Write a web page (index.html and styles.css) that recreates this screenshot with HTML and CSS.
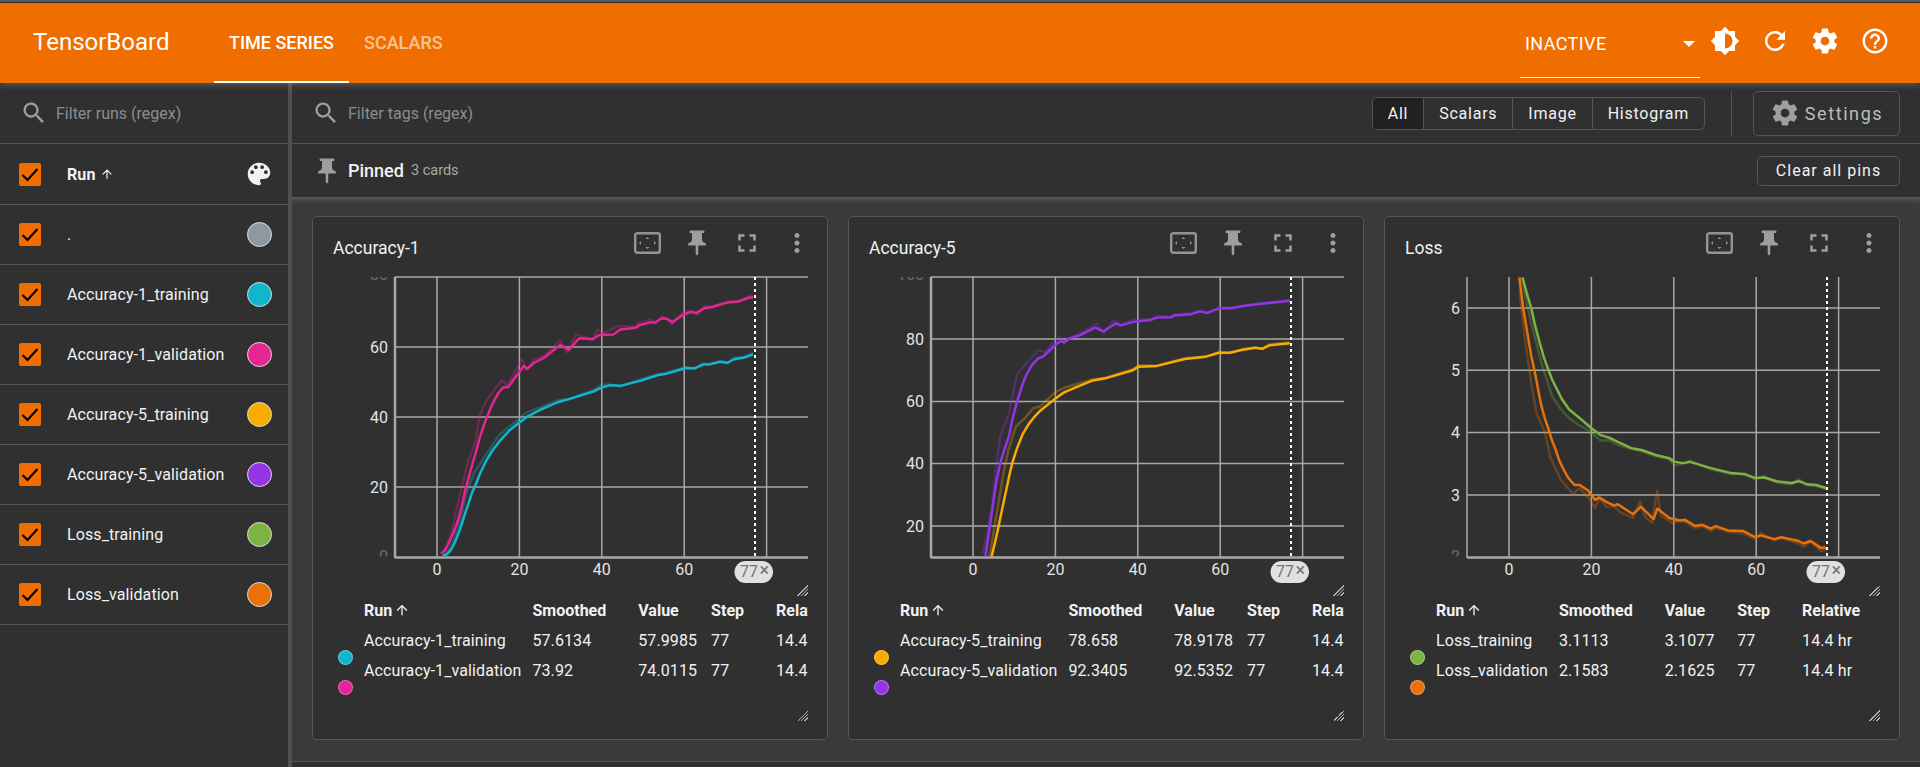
FILE: index.html
```html
<!DOCTYPE html>
<html lang="en">
  <head>
    <meta charset="UTF-8" />
    <title>TensorBoard</title>
    <link rel="stylesheet" href="styles.css">
  </head>
  <body>
    <svg class="sprites" width="0" height="0">
      <symbol id="i-search" viewBox="0 0 24 24"><path d="M15.5 14h-.79l-.28-.27C15.41 12.59 16 11.11 16 9.5 16 5.91 13.09 3 9.5 3S3 5.91 3 9.5 5.91 16 9.5 16c1.61 0 3.09-.59 4.23-1.57l.27.28v.79l5 4.99L20.49 19l-4.99-5zm-6 0C7.01 14 5 11.99 5 9.5S7.01 5 9.5 5 14 7.01 14 9.5 11.99 14 9.5 14z"/></symbol>
      <symbol id="i-pin" viewBox="0 0 24 24"><path d="M16 9V4h1c.55 0 1-.45 1-1s-.45-1-1-1H7c-.55 0-1 .45-1 1s.45 1 1 1h1v5c0 1.66-1.34 3-3 3v2h5.97v7l1 1 1-1v-7H19v-2c-1.66 0-3-1.34-3-3z"/></symbol>
      <symbol id="i-full" viewBox="0 0 24 24"><path d="M7 14H5v5h5v-2H7v-3zm-2-4h2V7h3V5H5v5zm12 7h-3v2h5v-5h-2v3zM14 5v2h3v3h2V5h-5z"/></symbol>
      <symbol id="i-more" viewBox="0 0 24 24"><path d="M12 8c1.1 0 2-.9 2-2s-.9-2-2-2-2 .9-2 2 .9 2 2 2zm0 2c-1.1 0-2 .9-2 2s.9 2 2 2 2-.9 2-2-.9-2-2-2zm0 6c-1.1 0-2 .9-2 2s.9 2 2 2 2-.9 2-2-.9-2-2-2z"/></symbol>
      <symbol id="i-gear" viewBox="0 0 24 24"><path d="M19.43 12.98c.04-.32.07-.64.07-.98s-.03-.66-.07-.98l2.11-1.65c.19-.15.24-.42.12-.64l-2-3.46c-.12-.22-.39-.3-.61-.22l-2.49 1c-.52-.4-1.08-.73-1.69-.98l-.38-2.65C14.46 2.18 14.25 2 14 2h-4c-.25 0-.46.18-.49.42l-.38 2.65c-.61.25-1.17.59-1.69.98l-2.49-1c-.23-.09-.49 0-.61.22l-2 3.46c-.13.22-.07.49.12.64l2.11 1.65c-.04.32-.07.65-.07.98s.03.66.07.98l-2.11 1.65c-.19.15-.24.42-.12.64l2 3.46c.12.22.39.3.61.22l2.49-1c.52.4 1.08.73 1.69.98l.38 2.65c.03.24.24.42.49.42h4c.25 0 .46-.18.49-.42l.38-2.65c.61-.25 1.17-.59 1.69-.98l2.49 1c.23.09.49 0 .61-.22l2-3.46c.12-.22.07-.49-.12-.64l-2.11-1.65zM12 15.5c-1.93 0-3.5-1.57-3.5-3.5s1.57-3.5 3.5-3.5 3.5 1.57 3.5 3.5-1.57 3.5-3.5 3.5z"/></symbol>
      <symbol id="i-fit" viewBox="0 0 27 22"><rect x="1.2" y="1.2" width="24.6" height="19.6" rx="2" fill="none" stroke="currentColor" stroke-width="2.4"/><path d="M13.5 5l2 2h-4zM13.5 17l-2-2h4zM5 11l2-2v4zM22 11l-2 2V9z"/></symbol>
      <symbol id="i-up" viewBox="0 0 24 24"><path d="M4 12l1.41 1.41L11 7.83V20h2V7.83l5.58 5.59L20 12l-8-8-8 8z"/></symbol>
      <symbol id="i-check" viewBox="0 0 22 23"><path d="M3.5 12l5 5L18.5 6" fill="none" stroke="#000" stroke-width="2.2"/></symbol>
      <clipPath id="plot-clip"><rect x="82" y="9" width="413" height="281"/></clipPath>
      <clipPath id="top-clip"><rect x="0" y="9" width="82" height="40"/></clipPath>
      <clipPath id="axis-clip"><rect x="0" y="270" width="82" height="18.5"/></clipPath>
    </svg>

    <header class="topbar">
      <div class="brand">TensorBoard</div>
      <nav class="tabs">
        <a class="tab active">TIME SERIES</a>
        <a class="tab">SCALARS</a>
      </nav>
      <div class="status">
        <span>INACTIVE</span>
        <i class="caret"></i>
      </div>
      <button class="top-icon"><svg viewBox="0 0 24 24"><path d="M20 15.31L23.31 12 20 8.69V4h-4.69L12 .69 8.69 4H4v4.69L.69 12 4 15.31V20h4.69L12 23.31 15.31 20H20v-4.69zM12 18V6c3.31 0 6 2.69 6 6s-2.69 6-6 6z"/></svg></button>
      <button class="top-icon"><svg viewBox="0 0 24 24"><path d="M17.65 6.35C16.2 4.9 14.21 4 12 4c-4.42 0-7.99 3.58-7.99 8s3.57 8 7.99 8c3.73 0 6.84-2.55 7.73-6h-2.08c-.82 2.33-3.04 4-5.65 4-3.31 0-6-2.69-6-6s2.69-6 6-6c1.66 0 3.14.69 4.22 1.78L13 11h7V4l-2.35 2.35z"/></svg></button>
      <button class="top-icon"><svg><use href="#i-gear"/></svg></button>
      <button class="top-icon"><svg viewBox="0 0 24 24"><path d="M11 18h2v-2h-2v2zm1-16C6.48 2 2 6.48 2 12s4.48 10 10 10 10-4.48 10-10S17.52 2 12 2zm0 18c-4.41 0-8-3.59-8-8s3.59-8 8-8 8 3.59 8 8-3.59 8-8 8zm0-14c-2.21 0-4 1.79-4 4h2c0-1.1.9-2 2-2s2 .9 2 2c0 2-3 1.75-3 5h2c0-2.25 3-2.5 3-5 0-2.21-1.79-4-4-4z"/></svg></button>
    </header>

    <div class="layout">
      <!-- runs -->
      <aside class="runs">
        <div class="search-row">
          <svg class="search-icon"><use href="#i-search"/></svg>
          <span class="placeholder">Filter runs (regex)</span>
        </div>
        <div class="run-row run-head">
          <span class="check"><svg><use href="#i-check"/></svg></span>
          <span class="run-name">Run <svg class="sort-up"><use href="#i-up"/></svg></span>
          <svg class="palette" viewBox="0 0 24 24"><path d="M12 3c-4.97 0-9 4.03-9 9s4.03 9 9 9c.83 0 1.5-.67 1.5-1.5 0-.39-.15-.74-.39-1.01-.23-.26-.38-.61-.38-.99 0-.83.67-1.5 1.5-1.5H16c2.76 0 5-2.24 5-5 0-4.42-4.03-8-9-8zm-5.5 9c-.83 0-1.5-.67-1.5-1.5S5.67 9 6.5 9 8 9.67 8 10.5 7.33 12 6.5 12zm3-4C8.67 8 8 7.33 8 6.5S8.67 5 9.5 5s1.5.67 1.5 1.5S10.33 8 9.5 8zm5 0c-.83 0-1.5-.67-1.5-1.5S13.67 5 14.5 5s1.5.67 1.5 1.5S15.33 8 14.5 8zm3 4c-.83 0-1.5-.67-1.5-1.5S16.67 9 17.5 9s1.5.67 1.5 1.5-.67 1.5-1.5 1.5z"/></svg>
        </div>
        <div class="run-row"><span class="check"><svg><use href="#i-check"/></svg></span><span class="run-name">.</span><i class="swatch c-gray"></i></div>
        <div class="run-row"><span class="check"><svg><use href="#i-check"/></svg></span><span class="run-name">Accuracy-1_training</span><i class="swatch c-teal"></i></div>
        <div class="run-row"><span class="check"><svg><use href="#i-check"/></svg></span><span class="run-name">Accuracy-1_validation</span><i class="swatch c-pink"></i></div>
        <div class="run-row"><span class="check"><svg><use href="#i-check"/></svg></span><span class="run-name">Accuracy-5_training</span><i class="swatch c-yellow"></i></div>
        <div class="run-row"><span class="check"><svg><use href="#i-check"/></svg></span><span class="run-name">Accuracy-5_validation</span><i class="swatch c-purple"></i></div>
        <div class="run-row"><span class="check"><svg><use href="#i-check"/></svg></span><span class="run-name">Loss_training</span><i class="swatch c-green"></i></div>
        <div class="run-row"><span class="check"><svg><use href="#i-check"/></svg></span><span class="run-name">Loss_validation</span><i class="swatch c-orange"></i></div>
      </aside>

      <main class="dash">
        <div class="search-row filter-bar">
          <svg class="search-icon"><use href="#i-search"/></svg>
          <span class="placeholder">Filter tags (regex)</span>
          <div class="type-group">
            <span class="type-btn selected">All</span>
            <span class="type-btn">Scalars</span>
            <span class="type-btn">Image</span>
            <span class="type-btn">Histogram</span>
          </div>
          <i class="vline"></i>
          <button class="settings-btn"><svg><use href="#i-gear"/></svg>Settings</button>
        </div>

        <div class="pinned-head">
          <svg class="pin-icon"><use href="#i-pin"/></svg>
          <span class="pinned-title">Pinned</span>
          <span class="pinned-count">3 cards</span>
          <button class="clear-btn">Clear all pins</button>
        </div>

        <section class="cards">
          <!-- Accuracy-1 -->
          <article class="card">
            <div class="card-head">
              <span class="card-title">Accuracy-1</span>
              <div class="card-actions">
                <button class="card-btn"><svg class="fit"><use href="#i-fit"/></svg></button>
                <button class="card-btn"><svg><use href="#i-pin"/></svg></button>
                <button class="card-btn"><svg><use href="#i-full"/></svg></button>
                <button class="card-btn"><svg><use href="#i-more"/></svg></button>
              </div>
            </div>
            <div class="chart-wrap">
              <svg class="chart" width="495" height="328">
                <g class="grid">
                  <path d="M82 9H495M82 79H495M82 149H495M82 219H495"/>
                  <path d="M124 9V290M206.4 9V290M288.8 9V290M371.2 9V290M453.6 9V290"/>
                  <path class="axis" d="M82 9V290M82 289.5H495"/>
                </g>
                <g class="y-labels">
                  <text class="dim" x="75" y="12" clip-path="url(#top-clip)">80</text>
                  <text x="75" y="84.5">60</text>
                  <text x="75" y="154.5">40</text>
                  <text x="75" y="224.5">20</text>
                  <text class="dim" x="75" y="294" clip-path="url(#axis-clip)">0</text>
                </g>
                <g class="x-labels">
                  <text x="124" y="307">0</text>
                  <text x="206.4" y="307">20</text>
                  <text x="288.8" y="307">40</text>
                  <text x="371.2" y="307">60</text>
                </g>
                <g clip-path="url(#plot-clip)">
                  <g transform="translate(124 289) scale(4.12 -3.5)">
                    <polyline class="raw s-pink" points="1.5,1 3.5,7 6,20 7.7,28 9.4,33 10.2,40 11.9,44.5 15.7,50.6 17,49 20.7,56.6 21.6,53.5 23.6,56.4 26.1,57.5 29.9,61.8 31.6,58.5 33.8,63.6 37.8,62.2 38.9,65 40.4,64 44,66 48,65.8 49,66.8 52,67.8 53,66.5 54.6,68.8 56,68 57,66.5 60,70.2 62,70.3 63,69.2 65,71.8 66.7,71.5 70.5,73 73,73 75.5,74.4 76.7,74.6"/>
                    <polyline class="raw s-teal" points="2,0.5 3.5,3 5.6,10 7,18 9,24 11.9,29.3 15.2,35 17.7,37.4 20,39.5 21.9,41.4 25.3,42.8 29.5,44.9 32,45.1 37.8,47.6 39.9,49.2 42,49.3 44.5,48.7 49.5,50.8 53.7,52.2 55.4,52.5 60.4,54.3 62.5,53.7 64.6,55.3 66.3,55 68.8,56 70.5,55.3 72.1,56.9 74.6,57.2 76.7,58.3"/>
                    <polyline class="line s-teal" points="1.4,0.3 2.5,0.9 3.5,2.2 4.5,4.6 5.6,7.9 6.7,12 7.7,15.5 8.5,18.3 9.4,20.7 10.6,24.3 11.9,27.4 13.5,30.5 15.2,33.1 17.7,36.3 20,38.4 21.9,40.1 25.3,42.2 29.5,44.3 32,45.1 37.8,47.2 39.9,48.4 42,49.1 44.5,48.9 49.5,50.4 53.7,52 55.4,52.3 60.4,54 62.5,53.9 64.6,55 66.3,55.1 68.8,55.8 70.5,55.5 72.1,56.5 74.6,57 76.7,57.9"/>
                    <polyline class="line s-pink" points="1,1 2,2 2.7,3.6 4,7 5.2,10.8 6,14.5 6.9,19.3 8.1,24.5 9.4,29.8 10.6,35 11.9,39.3 13,42.5 14,45 15,47 16,48.4 17.3,48.6 21,54.6 21.9,53.8 23.6,55.5 26.1,57 29.9,60.6 32,59.2 34.5,62.5 37.8,62.2 39.1,63.3 40.8,63.5 42.8,63.6 44.5,65 48.3,65.5 49.1,66.2 52,67.1 52.9,67 54.6,68.2 55.8,68.1 57.1,67.1 60,69.4 61.7,70 62.9,69.7 65,71.1 66.7,71.4 70.5,72.7 73,72.9 75.5,74 76.7,74.2"/>
                  </g>
                </g>
                <path class="cursor" d="M442 9V290"/>
                <g class="badge">
                  <rect x="421.5" y="293" width="38.5" height="22" rx="11"/>
                  <text x="427" y="309">77</text>
                  <text class="badge-x" x="446.5" y="308">×</text>
                </g>
              </svg>
            </div>
            <div class="table-wrap">
              <table class="values">
                <tr><th></th><th>Run<svg class="sort-slot"><use href="#i-up"/></svg></th><th>Smoothed<i class="slot"></i></th><th>Value<i class="slot"></i></th><th>Step<i class="slot"></i></th><th>Relative<i class="slot"></i></th></tr>
                <tr><td class="dot-cell"><i class="dot c-teal"></i></td><td>Accuracy-1_training</td><td>57.6134</td><td>57.9985</td><td>77</td><td>14.4 hr</td></tr>
                <tr><td class="dot-cell"><i class="dot c-pink"></i></td><td>Accuracy-1_validation</td><td>73.92</td><td>74.0115</td><td>77</td><td>14.4 hr</td></tr>
              </table>
            </div>
          </article>

          <!-- Accuracy-5 -->
          <article class="card">
            <div class="card-head">
              <span class="card-title">Accuracy-5</span>
              <div class="card-actions">
                <button class="card-btn"><svg class="fit"><use href="#i-fit"/></svg></button>
                <button class="card-btn"><svg><use href="#i-pin"/></svg></button>
                <button class="card-btn"><svg><use href="#i-full"/></svg></button>
                <button class="card-btn"><svg><use href="#i-more"/></svg></button>
              </div>
            </div>
            <div class="chart-wrap">
              <svg class="chart" width="495" height="328">
                <g class="grid">
                  <path d="M82 9H495M82 71H495M82 133.5H495M82 195.5H495M82 258H495"/>
                  <path d="M124 9V290M206.4 9V290M288.8 9V290M371.2 9V290M453.6 9V290"/>
                  <path class="axis" d="M82 9V290M82 289.5H495"/>
                </g>
                <g class="y-labels">
                  <text class="dim" x="75" y="12" clip-path="url(#top-clip)">100</text>
                  <text x="75" y="76.5">80</text>
                  <text x="75" y="139">60</text>
                  <text x="75" y="201">40</text>
                  <text x="75" y="263.5">20</text>
                </g>
                <g class="x-labels">
                  <text x="124" y="307">0</text>
                  <text x="206.4" y="307">20</text>
                  <text x="288.8" y="307">40</text>
                  <text x="371.2" y="307">60</text>
                </g>
                <g clip-path="url(#plot-clip)">
                  <g transform="translate(124 320.3) scale(4.12 -3.115)">
                    <polyline class="raw s-purple" points="2.4,11.2 4.5,25 5.5,38 6.6,48.7 8.7,56 10.2,66 10.8,69 13.5,73 15.8,76.5 17.5,75.9 20.8,80.7 22,79 24.6,81 27.5,83 30,85 31.7,82 34.2,86 35.9,84.6 39,86.3 43,86.4 44.7,87.3 48,87.2 49,88 53,88.3 55.1,89.3 56.8,88.3 59.7,90.1 63.1,90.2 65.6,90.8 70.6,91.6 76.9,92.5"/>
                    <polyline class="raw s-yellow" points="4,10.2 5.5,22 7.4,36.9 8.5,44 10.4,51.9 12.5,54.5 14.6,57.8 16.2,58.3 20,63 22.1,64.4 26.3,66 28.8,67 32.1,67.6 38.8,70.3 40.1,71.6 44.7,71.5 51.4,73.9 56.4,74.3 59.7,75.9 62.3,75.5 65.2,76.8 68.5,77.3 70.2,76.8 71.9,78.3 76.9,79"/>
                    <polyline class="line s-yellow" points="4.5,10.2 5.4,15 6.2,19.8 7,25 7.9,30.5 8.7,35.5 9.5,40.1 10.7,45 12,49.3 13.4,52.5 15,55.2 16.4,57.1 17.9,58.7 20,60.9 22.1,62.9 26.3,65.2 28.8,66.6 32.1,67.4 38.8,70 40.1,71.1 44.7,71.4 51.4,73.6 56.4,74.3 59.7,75.6 62.3,75.6 65.2,76.5 68.5,77.2 70.2,76.9 71.9,78 76.9,78.7"/>
                    <polyline class="line s-purple" points="3,10.2 4,19 4.9,27.3 5.7,34.5 6.6,40.1 7.6,44.5 8.7,48.7 9.7,55 10.8,60.4 11.9,65 12.9,68.4 14.2,71.5 15.8,73.8 17.1,74.5 20.4,78.6 21.3,79.4 22.1,78.9 23.3,80.2 25.9,81.2 29.6,83.7 31.7,82.5 34.6,85 35.9,84.4 39.2,85.6 43,86.1 44.7,86.9 48,87 48.9,87.6 53,88 55.1,88.9 56.8,88.4 59.7,89.8 63.1,90 65.6,90.6 70.6,91.4 76.9,92.3"/>
                  </g>
                </g>
                <path class="cursor" d="M442 9V290"/>
                <g class="badge">
                  <rect x="421.5" y="293" width="38.5" height="22" rx="11"/>
                  <text x="427" y="309">77</text>
                  <text class="badge-x" x="446.5" y="308">×</text>
                </g>
              </svg>
            </div>
            <div class="table-wrap">
              <table class="values">
                <tr><th></th><th>Run<svg class="sort-slot"><use href="#i-up"/></svg></th><th>Smoothed<i class="slot"></i></th><th>Value<i class="slot"></i></th><th>Step<i class="slot"></i></th><th>Relative<i class="slot"></i></th></tr>
                <tr><td class="dot-cell"><i class="dot c-yellow"></i></td><td>Accuracy-5_training</td><td>78.658</td><td>78.9178</td><td>77</td><td>14.4 hr</td></tr>
                <tr><td class="dot-cell"><i class="dot c-purple"></i></td><td>Accuracy-5_validation</td><td>92.3405</td><td>92.5352</td><td>77</td><td>14.4 hr</td></tr>
              </table>
            </div>
          </article>

          <!-- Loss -->
          <article class="card">
            <div class="card-head">
              <span class="card-title">Loss</span>
              <div class="card-actions">
                <button class="card-btn"><svg class="fit"><use href="#i-fit"/></svg></button>
                <button class="card-btn"><svg><use href="#i-pin"/></svg></button>
                <button class="card-btn"><svg><use href="#i-full"/></svg></button>
                <button class="card-btn"><svg><use href="#i-more"/></svg></button>
              </div>
            </div>
            <div class="chart-wrap">
              <svg class="chart" width="495" height="328">
                <g class="grid">
                  <path d="M82 40H495M82 102.3H495M82 164.6H495M82 227H495"/>
                  <path d="M124 9V290M206.4 9V290M288.8 9V290M371.2 9V290M453.6 9V290"/>
                  <path d="M82 9V290"/>
                  <path class="axis" d="M82 289.5H495"/>
                </g>
                <g class="y-labels">
                  <text x="75" y="45.5">6</text>
                  <text x="75" y="107.8">5</text>
                  <text x="75" y="170">4</text>
                  <text x="75" y="232.5">3</text>
                  <text class="dim" x="75" y="294" clip-path="url(#axis-clip)">2</text>
                </g>
                <g class="x-labels">
                  <text x="124" y="307">0</text>
                  <text x="206.4" y="307">20</text>
                  <text x="288.8" y="307">40</text>
                  <text x="371.2" y="307">60</text>
                </g>
                <g clip-path="url(#plot-clip)">
                  <g transform="translate(124 413.8) scale(4.12 -62.3)">
                    <polyline class="raw s-green" points="3,6.49 5.4,5.75 7.9,5.11 10.5,4.58 12.5,4.38 14.6,4.23 17,4.12 19.7,4.02 22.2,3.87 24.3,3.88 26.4,3.8 29.7,3.74 32.2,3.7 35.6,3.62 38.9,3.57 40.2,3.47 42.3,3.5 43.9,3.55 49,3.41 54,3.33 57.3,3.34 59.8,3.25 61.9,3.3 64.9,3.2 68.6,3.17 70.3,3.25 72.4,3.15 74.5,3.15 77,3.09"/>
                    <polyline class="raw s-orange" points="2.5,6.29 3.8,5.54 5.4,4.79 6.7,4.31 8.8,3.99 10,3.61 12.6,3.24 15.5,3.02 17.2,3.11 19.7,2.92 20.9,2.79 21.9,2.94 23.8,2.8 25.5,2.82 27,2.72 30.1,2.63 31.8,2.89 33,2.65 34.7,2.55 36,3.07 36.8,2.67 39.7,2.55 41.4,2.58 42.7,2.57 45.2,2.47 46.9,2.5 49,2.42 50.2,2.47 53.1,2.41 56.9,2.38 59.8,2.29 61.1,2.39 64.4,2.27 66.1,2.31 70.3,2.22 71.5,2.17 73.2,2.25 75.7,2.1 77,2.12"/>
                    <polyline class="line s-green" points="3.3,6.49 4.3,6.24 5.4,6 6.4,5.7 7.5,5.43 8.5,5.2 9.6,5 10.4,4.86 11.3,4.74 12.9,4.53 14.6,4.37 17.2,4.23 20,4.07 22.2,3.96 24.3,3.92 26.4,3.85 29.7,3.75 32.2,3.72 35.6,3.64 38.9,3.59 40.2,3.53 42.3,3.51 43.9,3.53 49,3.43 54,3.35 57.3,3.33 59.8,3.27 61.9,3.28 64.9,3.22 68.6,3.19 70.3,3.22 72.4,3.17 74.5,3.16 77,3.11"/>
                    <polyline class="line s-orange" points="2.5,6.49 3.5,5.98 4.6,5.54 5.4,5.23 6.3,4.96 7.1,4.68 7.9,4.42 8.7,4.23 9.6,4.05 10.4,3.88 11.3,3.73 12.1,3.57 13,3.44 14.3,3.28 15.9,3.16 17.2,3.16 19.2,3.07 20.9,2.92 21.9,2.96 23.8,2.88 25.5,2.83 26.4,2.85 30.1,2.69 32,2.81 35.1,2.61 36,2.78 38.9,2.63 41.4,2.59 42.7,2.6 45.2,2.5 46.9,2.52 49,2.46 50.2,2.5 53.1,2.43 56.9,2.42 59.8,2.32 61.1,2.35 64.4,2.29 66.1,2.32 70.3,2.26 71.5,2.22 73.2,2.26 75.7,2.15 77,2.15"/>
                  </g>
                </g>
                <path class="cursor" d="M442 9V290"/>
                <g class="badge">
                  <rect x="421.5" y="293" width="38.5" height="22" rx="11"/>
                  <text x="427" y="309">77</text>
                  <text class="badge-x" x="446.5" y="308">×</text>
                </g>
              </svg>
            </div>
            <div class="table-wrap">
              <table class="values">
                <tr><th></th><th>Run<svg class="sort-slot"><use href="#i-up"/></svg></th><th>Smoothed<i class="slot"></i></th><th>Value<i class="slot"></i></th><th>Step<i class="slot"></i></th><th>Relative<i class="slot"></i></th></tr>
                <tr><td class="dot-cell"><i class="dot c-green"></i></td><td>Loss_training</td><td>3.1113</td><td>3.1077</td><td>77</td><td>14.4 hr</td></tr>
                <tr><td class="dot-cell"><i class="dot c-orange"></i></td><td>Loss_validation</td><td>2.1583</td><td>2.1625</td><td>77</td><td>14.4 hr</td></tr>
              </table>
            </div>
          </article>
        </section>
      </main>
    </div>
  </body>
</html>
```

FILE: styles.css
```css
* {
  box-sizing: border-box;
}
html,
body {
  height: 100%;
}
body {
  margin: 0;
  overflow: hidden;
  display: flex;
  flex-direction: column;
  font-family: Roboto, "Liberation Sans", sans-serif;
  font-size: 16px;
  color: #f2f2f2;
  background-color: #303030;
}
button {
  font-family: inherit;
  background: none;
  border: none;
  padding: 0;
  color: inherit;
}
svg {
  fill: currentColor;
}
.sprites {
  position: absolute;
}

/* top bar */
.topbar {
  flex: none;
  position: relative;
  z-index: 1;
  height: 83px;
  display: flex;
  align-items: stretch;
  padding-right: 20px;
  color: white;
  background-color: #f06e00;
  border-top: 2px solid #5a5a5a;
  box-shadow: inset 0 1px 0 #2c2c2c, 0 2px 6px rgba(125, 125, 125, 0.55);
}
.brand {
  width: 214px;
  padding-left: 33px;
  font-size: 24px;
  line-height: 81px;
}
.tabs {
  display: flex;
  flex: 1;
}
.tab {
  padding: 0 15px;
  line-height: 81px;
  font-size: 18px;
  font-weight: 500;
  color: rgba(255, 255, 255, 0.6);
}
.tab.active {
  color: white;
  border-bottom: 2px solid white;
}
.status {
  width: 180px;
  height: 76px;
  padding: 8px 5px 0;
  display: flex;
  align-items: center;
  justify-content: space-between;
  font-size: 18px;
  letter-spacing: 0.4px;
  border-bottom: 1px solid white;
}
.caret {
  border: 6px solid transparent;
  border-top-color: white;
  border-bottom: none;
}
.top-icon {
  width: 50px;
  display: flex;
  align-items: center;
  justify-content: center;
  padding-bottom: 3px;
}
.top-icon svg {
  width: 30px;
  height: 30px;
}

.layout {
  flex: 1;
  display: flex;
  min-height: 0;
}

/* runs column */
.runs {
  flex: none;
  width: 292px;
  background-color: #303030;
  border-right: 4px solid #505050;
}
.search-row {
  height: 61px;
  display: flex;
  align-items: center;
  padding-left: 20px;
  border-bottom: 1px solid #555;
}
.search-icon {
  width: 28px;
  height: 28px;
  color: #9e9e9e;
}
.placeholder {
  margin-left: 8px;
  color: #8d8d8d;
}
.run-row {
  height: 60px;
  display: flex;
  align-items: center;
  padding: 0 16px 0 19px;
  letter-spacing: 0.1px;
  border-bottom: 1px solid #555;
}
.run-head {
  height: 61px;
}
.check {
  width: 22px;
  height: 23px;
  border-radius: 2px;
  background-color: #f06e00;
}
.check svg {
  display: block;
  width: 22px;
  height: 23px;
}
.run-name {
  flex: 1;
  margin-left: 26px;
}
.run-head .run-name {
  font-weight: 700;
}
.sort-up {
  width: 14px;
  height: 14px;
  vertical-align: -1px;
}
.palette {
  width: 30px;
  height: 30px;
  margin-right: -2px;
}
.swatch {
  width: 25px;
  height: 25px;
  border-radius: 50%;
  border: 1px solid #dcdcdc;
}
.c-gray { background-color: #8e98a3; }
.c-teal { background-color: #12b5cb; }
.c-pink { background-color: #e52592; }
.c-yellow { background-color: #f9ab00; }
.c-purple { background-color: #9334e6; }
.c-green { background-color: #7cb342; }
.c-orange { background-color: #e8710a; }

/* main column */
.dash {
  flex: 1;
  min-width: 0;
  display: flex;
  flex-direction: column;
}
.filter-bar {
  padding-right: 20px;
}
.type-group {
  display: flex;
  margin-left: auto;
  height: 33px;
  border: 1px solid #555;
  border-radius: 5px;
  overflow: hidden;
  letter-spacing: 0.75px;
}
.type-btn {
  padding: 0 15px;
  line-height: 31px;
  border-left: 1px solid #555;
}
.type-btn:first-child {
  border-left: none;
}
.type-btn.selected {
  background-color: #212121;
}
.vline {
  width: 1px;
  height: 45px;
  margin: 0 21px 0 26px;
  background-color: #555;
}
.settings-btn {
  width: 147px;
  height: 45px;
  display: flex;
  align-items: center;
  justify-content: center;
  gap: 5px;
  font-size: 18px;
  letter-spacing: 1.6px;
  color: #bdbdbd;
  border: 1px solid #555;
  border-radius: 5px;
}
.settings-btn svg {
  width: 30px;
  height: 30px;
  color: #9e9e9e;
}

.pinned-head {
  height: 53px;
  display: flex;
  align-items: center;
  padding: 0 20px;
}
.pin-icon {
  width: 30px;
  height: 30px;
  color: #9e9e9e;
}
.pinned-title {
  margin-left: 6px;
  font-size: 18px;
  font-weight: 500;
}
.pinned-count {
  margin-left: 7px;
  font-size: 14.5px;
  color: #aaa;
}
.clear-btn {
  width: 143px;
  height: 30px;
  margin-left: auto;
  font-size: 16px;
  letter-spacing: 1px;
  border: 1px solid #555;
  border-radius: 5px;
}

/* cards */
.cards {
  display: grid;
  grid-template-columns: repeat(3, 1fr);
  gap: 20px;
  padding: 19px 20px 21px;
  background-color: #3a3a3a;
  border-bottom: 1px solid #555;
  box-shadow: inset 0 6px 6px -4px rgba(120, 120, 120, 0.7);
}
.card {
  height: 524px;
  background-color: #303030;
  border: 1px solid #555;
  border-radius: 5px;
}
.card-head {
  height: 51px;
  display: flex;
  align-items: center;
  justify-content: space-between;
  padding: 10px 5px 0 20px;
}
.card-title {
  font-size: 17.5px;
}
.card-actions {
  display: flex;
  margin-top: -10px;
}
.card-btn {
  width: 50px;
  height: 30px;
  display: flex;
  align-items: center;
  justify-content: center;
  color: #9e9e9e;
}
.card-btn svg {
  width: 30px;
  height: 30px;
}
.card-btn svg.fit {
  width: 27px;
  height: 22px;
  color: #949494;
}

/* charts */
.chart-wrap {
  width: 495px;
  height: 328px;
  overflow: hidden;
  resize: vertical;
}
.chart {
  display: block;
}
.chart-wrap::-webkit-resizer,
.table-wrap::-webkit-resizer {
  background:
    linear-gradient(135deg, #303030 50%, transparent 50%) right bottom / 11px 11px no-repeat,
    repeating-linear-gradient(135deg, #b0b0b0 0 1px, #303030 1px 2.5px) right bottom / 11px 11px no-repeat;
}
.grid path {
  fill: none;
  stroke: #a8a8a8;
  stroke-width: 1.5;
}
.grid .axis {
  stroke-width: 2.5;
}
.y-labels text,
.x-labels text {
  font-size: 16px;
  fill: #e4e4e4;
}
.y-labels text {
  text-anchor: end;
}
.x-labels text {
  text-anchor: middle;
}
.y-labels .dim {
  fill: #6e6e6e;
}
polyline {
  fill: none;
  vector-effect: non-scaling-stroke;
  stroke-linejoin: round;
}
.line {
  stroke-width: 2.5;
}
.raw {
  stroke-width: 2.5;
  stroke-opacity: 0.3;
}
.s-teal { stroke: #12b5cb; }
.s-pink { stroke: #e52592; }
.s-yellow { stroke: #f9ab00; }
.s-purple { stroke: #9334e6; }
.s-green { stroke: #7cb342; }
.s-orange { stroke: #e8710a; }
.cursor {
  fill: none;
  stroke: white;
  stroke-width: 2;
  stroke-dasharray: 3 3;
}
.badge rect {
  fill: #e0e0e0;
}
.badge text {
  font-size: 16px;
  fill: #757575;
}
.badge .badge-x {
  font-size: 18px;
}

/* value table */
.table-wrap {
  width: 495px;
  height: 125px;
  padding-left: 25px;
  overflow: hidden;
  resize: vertical;
}
.values {
  width: max-content;
  border-collapse: collapse;
  white-space: nowrap;
}
.values th {
  height: 29px;
  padding: 0 14px 0 0;
  text-align: left;
  font-weight: 700;
}
.values td {
  height: 30px;
  padding: 0 14px 0 0;
  letter-spacing: 0.1px;
}
.values th:nth-child(2),
.values td:nth-child(2) {
  padding-right: 11px;
}
.values .dot-cell,
.values th:first-child {
  min-width: 26px;
  padding: 0 11px 0 0;
}
.slot {
  display: inline-block;
  width: 18px;
  height: 13px;
}
.sort-slot {
  width: 16px;
  height: 16px;
  margin-left: 2px;
  vertical-align: -2px;
}
.dot {
  display: block;
  width: 15px;
  height: 15px;
  border-radius: 50%;
  border: 1px solid rgba(255, 255, 255, 0.3);
  transform: translateY(17px);
}
```
